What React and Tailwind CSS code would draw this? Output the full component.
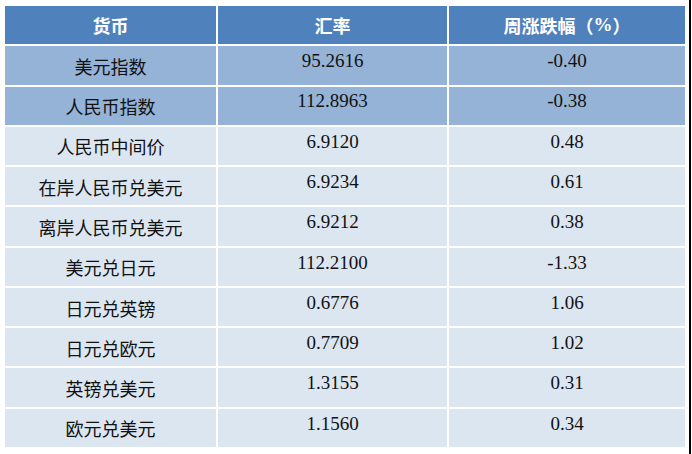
import { Fragment } from "react";

const rows = [
  { name: "美元指数", rate: "95.2616", change: "-0.40", dark: true },
  { name: "人民币指数", rate: "112.8963", change: "-0.38", dark: true },
  { name: "人民币中间价", rate: "6.9120", change: "0.48" },
  { name: "在岸人民币兑美元", rate: "6.9234", change: "0.61" },
  { name: "离岸人民币兑美元", rate: "6.9212", change: "0.38" },
  { name: "美元兑日元", rate: "112.2100", change: "-1.33" },
  { name: "日元兑英镑", rate: "0.6776", change: "1.06" },
  { name: "日元兑欧元", rate: "0.7709", change: "1.02" },
  { name: "英镑兑美元", rate: "1.3155", change: "0.31" },
  { name: "欧元兑美元", rate: "1.1560", change: "0.34" },
];

const cjk = "font-['Noto_Sans_CJK_SC',sans-serif]";
const serif = "font-['Liberation_Serif','Noto_Sans_CJK_SC',serif]";

export default function App() {
  return (
    <div className="w-[692px] h-[454px] bg-white">
      <div className="w-[691px] h-[454px] border-r-2 border-black pl-[5px] pt-[6px]">
        <div className="w-[680px] h-[441px] grid grid-cols-[211px_229px_236px] grid-rows-11 gap-[2px] bg-white">
          {/* Header */}
          <div className={`bg-[#4f81bd] flex items-center justify-center text-white font-bold text-[18px] ${cjk}`}>
            货币
          </div>
          <div className={`bg-[#4f81bd] flex items-center justify-center text-white font-bold text-[18px] ${cjk}`}>
            汇率
          </div>
          <div className={`bg-[#4f81bd] flex items-center justify-center text-white font-bold text-[18px] ${cjk}`}>
            周涨跌幅（<span className={`${serif} text-[19px]`}>%</span>）
          </div>

          {rows.map((r) => {
            const bg = r.dark ? "bg-[#95b3d7]" : "bg-[#dce6f1]";
            return (
              <Fragment key={r.name}>
                <div className={`${bg} flex items-center justify-center pt-[2px] text-[18px] text-[#111] ${cjk}`}>
                  {r.name}
                </div>
                <div className={`${bg} flex items-center justify-center pb-[8px] text-[19px] text-[#111] ${serif}`}>
                  {r.rate}
                </div>
                <div className={`${bg} flex items-center justify-center pb-[8px] text-[19px] text-[#111] ${serif}`}>
                  {r.change}
                </div>
              </Fragment>
            );
          })}
        </div>
      </div>
    </div>
  );
}
